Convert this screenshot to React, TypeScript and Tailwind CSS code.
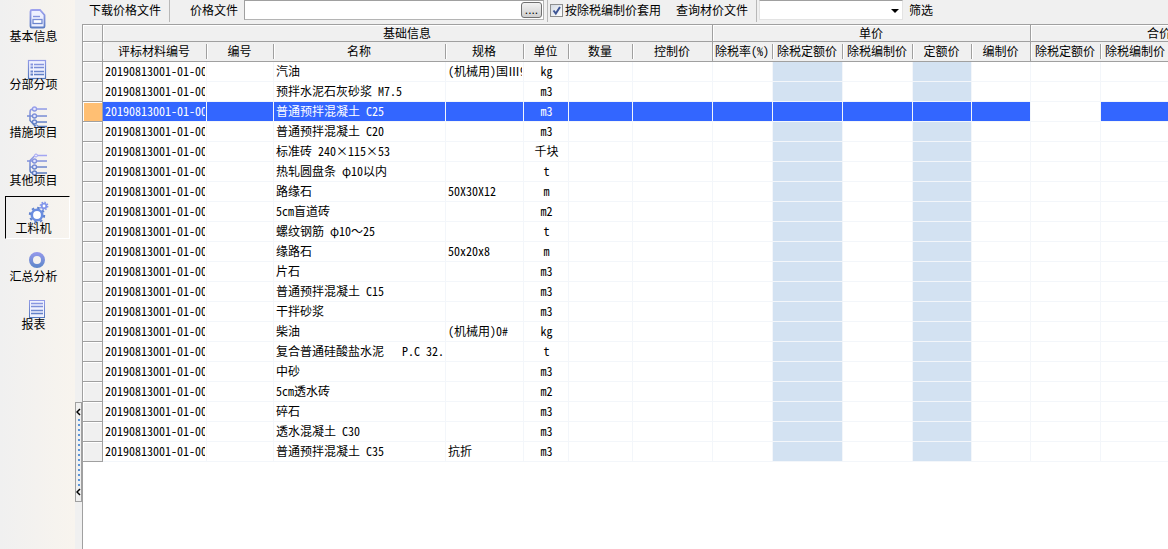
import type { ReactNode } from "react";
import clsx from "clsx";

type Material = {
    name: string;
    spec?: string;
    unit: string;
};

const CODE = "20190813001-01-001";

const materials: Material[] = [
    { name: "汽油", spec: "(机械用)国Ⅲ93#", unit: "kg" },
    { name: "预拌水泥石灰砂浆 M7.5", unit: "m3" },
    { name: "普通预拌混凝土 C25", unit: "m3" },
    { name: "普通预拌混凝土 C20", unit: "m3" },
    { name: "标准砖 240×115×53", unit: "千块" },
    { name: "热轧圆盘条 φ10以内", unit: "t" },
    { name: "路缘石", spec: "50X30X12", unit: "m" },
    { name: "5cm盲道砖", unit: "m2" },
    { name: "螺纹钢筋 φ10～25", unit: "t" },
    { name: "缘路石", spec: "50x20x8", unit: "m" },
    { name: "片石", unit: "m3" },
    { name: "普通预拌混凝土 C15", unit: "m3" },
    { name: "干拌砂浆", unit: "m3" },
    { name: "柴油", spec: "(机械用)0#", unit: "kg" },
    { name: "复合普通硅酸盐水泥   P.C 32.", unit: "t" },
    { name: "中砂", unit: "m3" },
    { name: "5cm透水砖", unit: "m2" },
    { name: "碎石", unit: "m3" },
    { name: "透水混凝土 C30", unit: "m3" },
    { name: "普通预拌混凝土 C35", spec: "抗折", unit: "m3" },
];

const SELECTED_ROW = 2;

const columns = [
    { label: "评标材料编号", width: "w-[104px]" },
    { label: "编号", width: "w-[67px]" },
    { label: "名称", width: "w-[172px]" },
    { label: "规格", width: "w-[78px]" },
    { label: "单位", width: "w-[45px]" },
    { label: "数量", width: "w-[64px]" },
    { label: "控制价", width: "w-[80px]", last: true },
    { label: "除税率(%)", width: "w-[60px]" },
    { label: "除税定额价", width: "w-[70px]", tinted: true },
    { label: "除税编制价", width: "w-[70px]" },
    { label: "定额价", width: "w-[59px]", tinted: true },
    { label: "编制价", width: "w-[59px]", last: true },
    { label: "除税定额价", width: "w-[70px]", focused: true },
    { label: "除税编制价", width: "w-[70px]" },
    { label: "定额价", width: "w-[59px]" },
    { label: "编制价", width: "w-[59px]", last: true },
];

const groups = [
    { label: "基础信息", span: 7 },
    { label: "单价", span: 5 },
    { label: "合价", span: 4 },
];

function Icon({ children }: { children: ReactNode }) {
    return (
        <svg viewBox="0 0 22 22" className="mx-auto block h-[22px] w-[22px] overflow-visible" fill="none" aria-hidden="true">
            <defs>
                <linearGradient id="ink" x1="0" y1="0" x2="0" y2="22" gradientUnits="userSpaceOnUse">
                    <stop offset="0" stopColor="#a3a5f2" />
                    <stop offset="1" stopColor="#5478bd" />
                </linearGradient>
            </defs>
            {children}
        </svg>
    );
}

function DocumentIcon() {
    return (
        <Icon>
            <path d="M5 2h8l4.500 5v11.200a1.300 1.300 0 0 1-1.300 1.300H4.800A1.300 1.300 0 0 1 3.500 18.200V3.500A1.500 1.500 0 0 1 5 2z" fill="#eef0ff" stroke="url(#ink)" strokeWidth="1.800" />
            <path d="M6 8.500h7" stroke="url(#ink)" strokeWidth="1.400" />
            <rect x="6" y="11.500" width="9" height="4" fill="#fff" stroke="url(#ink)" strokeWidth="1.300" />
        </Icon>
    );
}

function DetailIcon() {
    return (
        <Icon>
            <rect x="1.500" y="4.500" width="17" height="18" fill="#f0f1fe" stroke="url(#ink)" strokeWidth="1.200" />
            <path d="M7 8.500h10M7 11.500h10M7 15.500h10M7 18.500h10" stroke="url(#ink)" strokeWidth="1.300" />
            <path d="M3.500 8.500h2.500M3.500 11.500h2.500M3.500 15.500h2.500M3.500 18.500h2.500" stroke="url(#ink)" strokeWidth="2.200" />
        </Icon>
    );
}

function TreeIcon({ flip = false }: { flip?: boolean }) {
    return (
        <Icon>
            {flip ? (
                <>
                    <path d="M10 3.500h10" stroke="#a3a5f2" strokeWidth="1.500" />
                    <path d="M7.500 4L3 8.500V18q0 3 3 3h14M0 9h20M3 15h17" stroke="url(#ink)" strokeWidth="1.500" />
                    <circle cx="9" cy="3.500" r="1.500" fill="#e5e7ff" stroke="#a3a5f2" />
                    <circle cx="7.500" cy="9" r="2" fill="#e5e7ff" stroke="url(#ink)" strokeWidth="1.300" />
                    <circle cx="7.500" cy="15" r="2" fill="#e5e7ff" stroke="url(#ink)" strokeWidth="1.300" />
                    <circle cx="7.500" cy="21" r="2" fill="#e5e7ff" stroke="url(#ink)" strokeWidth="1.300" />
                </>
            ) : (
                <>
                    <path d="M20 5H6q-3 0-3 3v8.500L8.500 22.500M0 12h20M8 18h12M10 22.500h10" stroke="url(#ink)" strokeWidth="1.500" />
                    <circle cx="7.500" cy="5" r="2" fill="#e5e7ff" stroke="url(#ink)" strokeWidth="1.300" />
                    <circle cx="7.500" cy="12" r="2" fill="#e5e7ff" stroke="url(#ink)" strokeWidth="1.300" />
                    <circle cx="7.500" cy="18" r="2" fill="#e5e7ff" stroke="url(#ink)" strokeWidth="1.300" />
                    <circle cx="9.500" cy="22.500" r="1.500" fill="#e5e7ff" stroke="url(#ink)" />
                </>
            )}
        </Icon>
    );
}

function GearsIcon() {
    return (
        <Icon>
            <circle cx="10" cy="15" r="5.200" fill="#fff" stroke="#6a8de0" strokeWidth="2.600" />
            <circle cx="10" cy="15" r="7.200" stroke="#5f82cf" strokeWidth="2" strokeDasharray="2.600 3.050" />
            <circle cx="17" cy="6" r="2.300" fill="#fff" stroke="#8094ea" strokeWidth="1.800" />
            <circle cx="17" cy="6" r="3.700" stroke="#8094ea" strokeWidth="1.400" strokeDasharray="1.450 1.450" />
        </Icon>
    );
}

function DonutIcon() {
    return (
        <Icon>
            <defs>
                <linearGradient id="ring" x1="0" y1="0" x2="0" y2="1">
                    <stop offset="0" stopColor="#9699ec" />
                    <stop offset="1" stopColor="#5b86c8" />
                </linearGradient>
            </defs>
            <path d="M10 4a8 8 0 1 0 0 16a8 8 0 1 0 0-16zM10 8a4 4 0 1 1 0 8a4 4 0 1 1 0-8z" fill="url(#ring)" fillRule="evenodd" />
        </Icon>
    );
}

function ReportIcon() {
    return (
        <Icon>
            <rect x="2.500" y="4.500" width="15" height="17" fill="#f0f1fe" stroke="url(#ink)" />
            <path d="M4 7.500h12M4 10.500h12M4 14.500h12M4 17.500h12" stroke="url(#ink)" strokeWidth="1.300" />
        </Icon>
    );
}

const navItems = [
    { label: "基本信息", icon: <DocumentIcon /> },
    { label: "分部分项", icon: <DetailIcon /> },
    { label: "措施项目", icon: <TreeIcon /> },
    { label: "其他项目", icon: <TreeIcon flip /> },
    { label: "工料机", icon: <GearsIcon />, active: true },
    { label: "汇总分析", icon: <DonutIcon /> },
    { label: "报表", icon: <ReportIcon /> },
];

function Sidebar() {
    return (
        <nav className="flex w-[75px] shrink-0 flex-col gap-[5px] bg-linear-to-r from-[#f0f0f0] to-[#f8f4ee] px-[5px] pt-1">
            {navItems.map((item) => (
                <button
                    key={item.label}
                    type="button"
                    className={clsx(
                        "h-[43px] border pt-0.5 pb-1 text-center",
                        item.active ? "border-t-black border-r-white border-b-white border-l-black" : "border-transparent"
                    )}
                >
                    {item.icon}
                    <span className="relative block pr-2 leading-3">{item.label}</span>
                </button>
            ))}
        </nav>
    );
}

function Chevron() {
    return (
        <svg viewBox="0 0 5 8" className="h-2 w-[5px]" fill="none" aria-hidden="true">
            <path d="M4 1L1 4l3 3" stroke="#000" strokeWidth="1.500" />
        </svg>
    );
}

function Splitter() {
    return (
        <div className="w-[7px] shrink-0 pt-[402px]">
            <button type="button" aria-label="折叠" className="flex h-[100px] w-[7px] flex-col items-center justify-between border border-[#a0a0a0] py-[5px]">
                <Chevron />
                <span className="flex flex-col gap-[3px]">
                    {Array.from({ length: 14 }, (_, i) => (
                        <span key={i} className="block size-[2px] bg-[#5b95d8]" />
                    ))}
                </span>
                <Chevron />
            </button>
        </div>
    );
}

function Divider() {
    return <span className="h-[22px] w-px shrink-0 self-start bg-[#b8b8b8]" />;
}

function Toolbar() {
    return (
        <div className="flex h-6 items-center pb-1 pl-[7px] whitespace-nowrap">
            <button type="button" className="mr-2">下载价格文件</button>
            <Divider />
            <label htmlFor="price-file" className="mr-1.5 ml-5">价格文件</label>
            <div className="flex h-5 w-[300px] shrink-0 items-center self-start border border-t-[#a0a0a0] border-r-[#b4b4b4] border-b-[#b4b4b4] border-l-[#a0a0a0] bg-white pr-px">
                <input id="price-file" type="text" className="min-w-0 flex-1 px-1 outline-none" />
                <button type="button" className="flex h-4 w-[21px] items-center justify-center rounded-[3px] border border-[#707070] bg-linear-to-b from-[#f2f2f2] to-[#cfcfcf] font-['Liberation_Sans',sans-serif] leading-3">
                    ....
                </button>
            </div>
            <span className="w-[3px]" />
            <Divider />
            <label className="relative ml-0.5 flex items-center gap-0.5">
                <input type="checkbox" defaultChecked className="peer size-[13px] appearance-none border border-[#8e8f8f] bg-linear-to-br from-[#d5dbe3] to-white" />
                <svg viewBox="0 0 13 13" className="pointer-events-none absolute left-0 hidden size-[13px] peer-checked:block" fill="none" aria-hidden="true">
                    <path d="M3.500 6.500l2.300 3L10 3" stroke="#3d5595" strokeWidth="2" />
                </svg>
                按除税编制价套用
            </label>
            <button type="button" className="mr-2 ml-[15px]">查询材价文件</button>
            <Divider />
            <div className="relative ml-0.5 h-5 w-[144px] shrink-0 self-start">
                <select aria-label="材价文件" className="h-5 w-full appearance-none border border-t-[#a0a0a0] border-r-[#e3e3e3] border-b-[#e3e3e3] border-l-[#e3e3e3] bg-white px-1">
                    <option></option>
                </select>
                <svg viewBox="0 0 8 4" className="pointer-events-none absolute top-[9px] right-1 h-1 w-2" aria-hidden="true">
                    <path d="M0 0h8L4 4z" fill="#000" />
                </svg>
            </div>
            <button type="button" className="ml-1.5">筛选</button>
        </div>
    );
}

function Cell({ children, tinted, focused, selected, center }: {
    children?: ReactNode;
    tinted?: boolean;
    focused?: boolean;
    selected: boolean;
    center?: boolean;
}) {
    return (
        <td
            className={clsx(
                "h-5 border-r border-b border-[#f3f6fa] p-0 align-top",
                selected && !focused ? "bg-[#3366ff] text-white" : tinted ? "bg-[#d3e2f2]" : "bg-white",
                center && "text-center"
            )}
        >
            <div className="mr-px ml-0.5 overflow-hidden leading-[18px] whitespace-pre">{children}</div>
        </td>
    );
}

function MaterialTable() {
    return (
        <table className="w-[1206px] table-fixed border-separate border-spacing-0">
            <colgroup>
                <col className="w-5" />
                {columns.map((c, i) => (
                    <col key={i} className={c.width} />
                ))}
            </colgroup>
            <thead>
                <tr>
                    <th className="h-[17px] border-r border-b border-[#a0a0a0] bg-[#f0f0f0] p-0">
                        <div className="h-4 border-t border-l border-white" />
                    </th>
                    {groups.map((g) => (
                        <th key={g.label} colSpan={g.span} className="h-[17px] border-r border-b border-[#a0a0a0] bg-[#f0f0f0] p-0 font-normal">
                            <div className="h-4 border-t border-l border-white pr-0.5 leading-[13px]">{g.label}</div>
                        </th>
                    ))}
                </tr>
                <tr>
                    <th className="h-5 border-r border-b border-[#a0a0a0] bg-[#f0f0f0] p-0">
                        <div className="h-[19px] border-t border-l border-white" />
                    </th>
                    {columns.map((c, i) => (
                        <th key={i} className={clsx("h-5 border-b border-[#a0a0a0] bg-[#f0f0f0] p-0 font-normal", c.last && "border-r")}>
                            <div className={clsx("my-0.5 h-[15px] border-l border-l-white pr-0.5 leading-[13px] whitespace-nowrap", !c.last && "border-r border-r-[#a0a0a0]")}>
                                {c.label}
                            </div>
                        </th>
                    ))}
                </tr>
            </thead>
            <tbody>
                {materials.map((m, row) => {
                    const selected = row === SELECTED_ROW;
                    return (
                        <tr key={row}>
                            <th className="h-5 border-r border-b border-[#a0a0a0] bg-[#f0f0f0] p-0">
                                <div className={clsx("h-[19px] border-t border-l border-white", selected && "bg-[#ffbf73]")} />
                            </th>
                            <Cell selected={selected}>{CODE}</Cell>
                            <Cell selected={selected} />
                            <Cell selected={selected}>{m.name}</Cell>
                            <Cell selected={selected}>{m.spec}</Cell>
                            <Cell selected={selected} center>{m.unit}</Cell>
                            {columns.slice(5).map((c, i) => (
                                <Cell key={i} selected={selected} tinted={c.tinted} focused={c.focused} />
                            ))}
                        </tr>
                    );
                })}
            </tbody>
        </table>
    );
}

export default function App() {
    return (
        <div className="flex h-screen overflow-hidden bg-[#f0f0f0] font-['Noto_Sans_Mono_CJK_SC','Noto_Sans_CJK_SC',sans-serif] text-xs text-black">
            <Sidebar />
            <Splitter />
            <main className="flex min-w-0 flex-1 flex-col">
                <Toolbar />
                <div className="min-h-0 flex-1 overflow-hidden border-t border-l border-[#a0a0a0] bg-white">
                    <MaterialTable />
                </div>
            </main>
        </div>
    );
}
